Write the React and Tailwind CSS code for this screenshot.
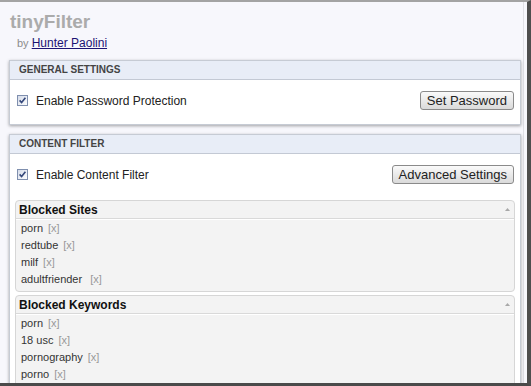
const sites = [
  { name: 'porn' },
  { name: 'redtube' },
  { name: 'milf' },
  { name: 'adultfriender', wide: true },
];

const keywords = [{ name: 'porn' }, { name: '18 usc' }, { name: 'pornography' }, { name: 'porno' }];

const CheckBox = () => (
  <svg width="11" height="11" viewBox="0 0 11 11" className="shrink-0">
    <defs>
      <linearGradient id="cbfill" x1="0" y1="0" x2="1" y2="1">
        <stop offset="0" stopColor="#d3dae8" />
        <stop offset="1" stopColor="#ffffff" />
      </linearGradient>
    </defs>
    <rect x="0.5" y="0.5" width="10" height="10" fill="url(#cbfill)" stroke="#7f8fae" />
    <path d="M2.6 5.4 L4.6 7.6 L8.4 2.8" fill="none" stroke="#34477a" strokeWidth="1.6" />
  </svg>
);

const Button = ({ children }) => (
  <button className="h-[19px] rounded-[3px] border border-[#8a8a8a] bg-gradient-to-b from-[#fafafa] to-[#dadada] px-[6px] text-[13px] leading-[17px] text-[#222]">
    {children}
  </button>
);

const Panel = ({ title, children, className = '' }) => (
  <div className={`ml-[9px] mr-[2px] border border-[#c6cbd4] bg-white shadow-[0_1px_3px_rgba(0,0,0,0.35)] ${className}`}>
    <div className="flex h-[19px] items-center border-b border-[#c3c9d4] bg-[#e8edf7] pl-[9px] text-[10px] font-bold leading-[12px] text-[#444]">
      {title}
    </div>
    {children}
  </div>
);

const OptionRow = ({ label, button }) => (
  <div className="flex h-[19px] items-center justify-between pl-[7px] pr-[6px]">
    <div className="flex items-center gap-[8px] text-[12px] leading-[14px] text-[#222]">
      <CheckBox />
      <span>{label}</span>
    </div>
    <Button>{button}</Button>
  </div>
);

const ListBox = ({ title, items, className = '' }) => (
  <div className={`rounded-[4px] border border-[#d6d6d6] bg-[#f3f3f3] ${className}`}>
    <div className="flex h-[18px] items-center justify-between border-b border-[#d9d9d9] pl-[3px] pr-[4px] shadow-[0_1px_0_#ffffff]">
      <span className="text-[12px] font-bold leading-[14px] text-[#111]">{title}</span>
      <svg width="5" height="3" viewBox="0 0 5 3">
        <path d="M0 3 L2.5 0 L5 3 Z" fill="#a8a8a8" />
      </svg>
    </div>
    <div className="pb-[3px] pl-[5px] pt-[1px]">
      {items.map((item, index) => (
        <div key={index} className="h-[17px] text-[11px] leading-[17px] text-[#333]">
          {item.name}
          <span className={`${item.wide ? 'ml-[8px]' : 'ml-[5px]'} text-[#999]`}>[x]</span>
        </div>
      ))}
    </div>
  </div>
);

export default function App() {
  return (
    <div
      className="h-[386px] w-[531px] overflow-hidden border-t-2 border-r-4 border-b-[3px] border-t-[#a3a3a3] border-r-[#4e4e4e] border-b-[#4a4a4a] bg-[#f7f7fc]"
      style={{ fontFamily: '"Liberation Sans", Arial, sans-serif' }}
    >
      <div className="h-full w-[524px] border-r border-[#e0e0e6]">
        <div className="pl-[10px] pt-[9px] text-[19px] font-bold leading-[22px] text-[#ababab]">tinyFilter</div>
        <div className="mt-[2px] pl-[17px] leading-[14px]">
          <span className="text-[11px] text-[#8c8c8c]">by </span>
          <a href="#" className="text-[12px] text-[#1c1273] underline">
            Hunter Paolini
          </a>
        </div>

        <Panel title="GENERAL SETTINGS" className="mt-[10px]">
          <div className="pb-[14px] pt-[11px]">
            <OptionRow label="Enable Password Protection" button="Set Password" />
          </div>
        </Panel>

        <Panel title="CONTENT FILTER" className="mt-[9px]">
          <div className="pt-[11px]">
            <OptionRow label="Enable Content Filter" button="Advanced Settings" />
          </div>
          <div className="px-[5px] pt-[16px]">
            <ListBox title="Blocked Sites" items={sites} />
            <ListBox title="Blocked Keywords" items={keywords} className="mt-[3px]" />
          </div>
        </Panel>
      </div>
    </div>
  );
}
